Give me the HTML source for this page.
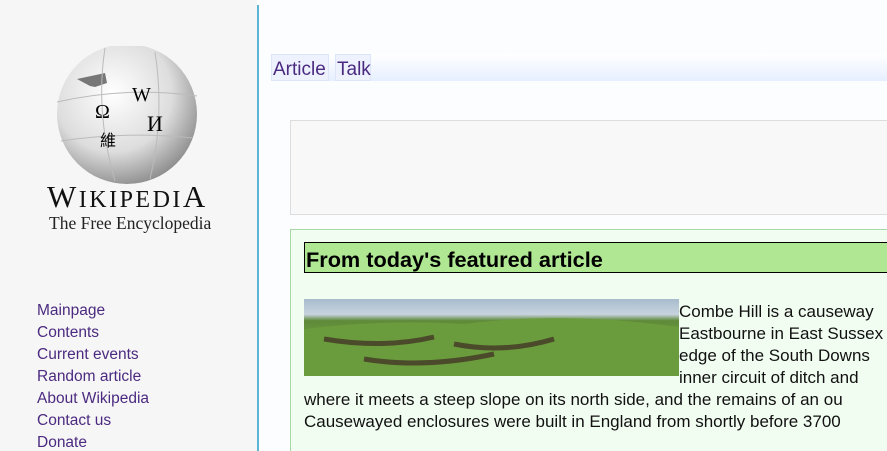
<!DOCTYPE html>
<html style="overflow:hidden;height:451px"><head><style>
body{margin:0;width:887px;height:451px;overflow:hidden;background:#fcfdff;font-family:"Liberation Sans",sans-serif;position:relative}
#side{position:absolute;left:0;top:0;width:257px;height:451px;background:#f6f6f6}
#line{position:absolute;left:257px;top:5px;width:2px;height:446px;background:#5bb5d6}
.nav{position:absolute;left:37px;top:300px;font-size:15.5px;line-height:22px;color:#4b2a80}
#tabbar{position:absolute;left:271px;top:54px;width:616px;height:27px;background:linear-gradient(#fff,#e6efff)}
.tab{position:absolute;top:54px;height:27px;font-size:19px;line-height:30px;color:#4b2a80;background:#edf2fe;border:1px solid #dce6f8;box-sizing:border-box;padding:0 1px}
#box1{position:absolute;left:290px;top:120px;width:597px;height:95px;background:#f8f8f8;border:1px solid #ddd;border-right:0;box-sizing:border-box}
#box2{position:absolute;left:290px;top:229px;width:597px;height:222px;background:#f2fdf2;border:1px solid #a8d8a8;border-right:0;border-bottom:0;box-sizing:border-box}
#hd{position:absolute;left:304px;top:242px;width:583px;height:31px;background:#afe793;border:1px solid #000;border-right:0;box-sizing:border-box;font-weight:bold;font-size:21.7px;line-height:33px;padding-left:1px}
#img{position:absolute;left:304px;top:299px;width:375px;height:77px;overflow:hidden;background:linear-gradient(#a8bccd 0,#c8d3de 20%,#5f8a3a 28%,#6fa13f 60%,#4c8a2c 100%)}
.t{position:absolute;font-size:17px;line-height:22px;white-space:nowrap;color:#111}
</style></head><body>
<div id="side">
<svg width="150" height="140" style="position:absolute;left:55px;top:46px" viewBox="0 0 150 140">
<defs><radialGradient id="g" cx="40%" cy="35%" r="70%"><stop offset="0" stop-color="#fff"/><stop offset=".6" stop-color="#ddd"/><stop offset="1" stop-color="#888"/></radialGradient></defs>
<circle cx="72" cy="68" r="70" fill="url(#g)"/>
<path d="M22 33 L50 27 L52 37 L40 41 L35 40 Z" fill="#777"/>
<path d="M2 56 Q72 40 142 50 M6 95 Q72 85 138 92 M50 2 Q40 66 60 135 M100 6 Q110 70 95 133" stroke="#bbb" fill="none"/>
<text x="40" y="72" font-size="20" font-family="Liberation Serif">Ω</text>
<text x="77" y="55" font-size="20" font-family="Liberation Serif">W</text>
<text x="92" y="85" font-size="22" font-family="Liberation Serif">И</text>
<text x="45" y="100" font-size="16" font-family="Noto Sans CJK SC">維</text>
</svg>
<div style="position:absolute;left:47px;top:179px;font-family:'Liberation Serif',serif;font-size:31px;letter-spacing:2.5px;color:#111">W<span style="font-size:24px">IKIPEDI</span>A</div>
<div style="position:absolute;left:49px;top:213px;font-family:'Liberation Serif',serif;font-size:17.5px;color:#222">The Free Encyclopedia</div>
<div class="nav">Mainpage<br>Contents<br>Current events<br>Random article<br>About Wikipedia<br>Contact us<br>Donate</div>
</div>
<div id="line"></div>
<div id="tabbar"></div>
<div class="tab" style="left:271px;width:58px">Article</div>
<div class="tab" style="left:335px;width:36px">Talk</div>
<div id="box1"></div>
<div id="box2"></div>
<div id="hd">From today's featured article</div>
<div id="img"><svg width="375" height="77"><path d="M0 30 Q80 20 160 25 Q260 12 375 28 L375 77 L0 77Z" fill="#6a9c3d"/><path d="M20 40 Q80 50 130 38 M150 45 Q200 55 250 40 M60 60 Q120 70 190 55" stroke="#4b4a2a" stroke-width="5" fill="none"/></svg></div>
<div class="t" style="left:679px;top:301px">Combe Hill is a causeway</div>
<div class="t" style="left:679px;top:323px">Eastbourne in East Sussex</div>
<div class="t" style="left:679px;top:345px">edge of the South Downs</div>
<div class="t" style="left:679px;top:367px">inner circuit of ditch and</div>
<div class="t" style="left:304px;top:389px">where it meets a steep slope on its north side, and the remains of an ou</div>
<div class="t" style="left:304px;top:411px">Causewayed enclosures were built in England from shortly before 3700</div>
</body></html>
